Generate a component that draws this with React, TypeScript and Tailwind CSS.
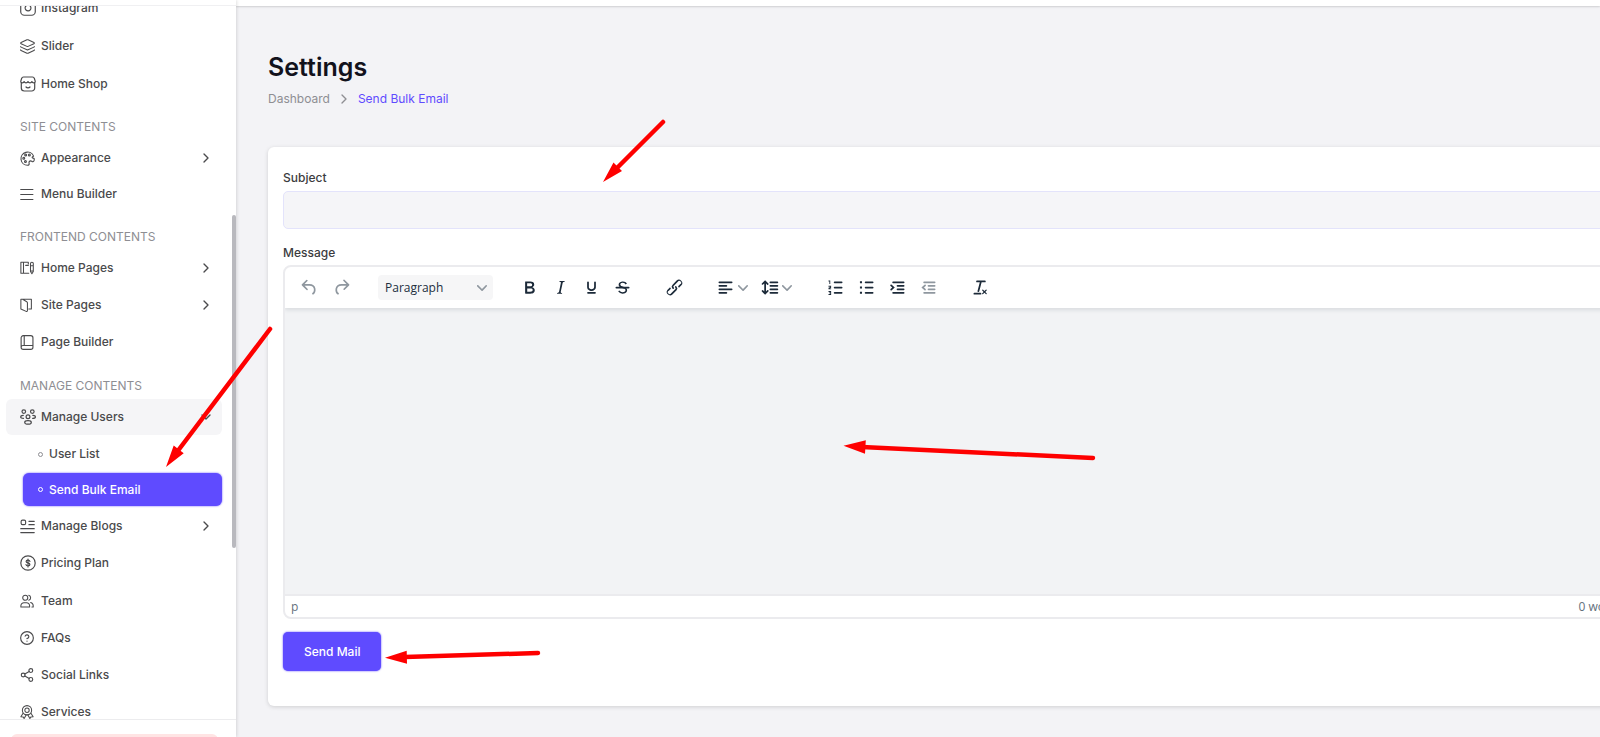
import type { ReactNode } from 'react'
import { ChevronRight, CircleHelp, Instagram, Layers, Share2 } from 'lucide-react'

type NavItem = {
    label: string
    icon: ReactNode
    size?: 'sm' | 'md' | 'lg'
    arrow?: boolean
}

const heights = {
    sm: 'h-9',
    md: 'h-[37px]',
    lg: 'h-[38px]',
}

// cuts the empty edge lucide leaves around its icons
const tight = '1 1 22 22'

function Svg({ children, size = 15 }: { children: ReactNode; size?: number }) {
    return (
        <svg width={size} height={size} viewBox="0 0 16 16" fill="none" stroke="currentColor" strokeWidth="1.2" strokeLinecap="round" strokeLinejoin="round">
            {children}
        </svg>
    )
}

const shopIcon = (
    <Svg size={16}>
        <path d="M1.300 6.500V12a3 3 0 0 0 3 3h7.400a3 3 0 0 0 3-3V6.500" />
        <path d="M3.500 1h9c1.100 0 1.600.5 1.800 1.300l.9 2.800c.2 1-.6 1.700-1.500 1.700s-1.600-.6-1.800-1.300c-.3.8-1 1.300-1.900 1.300S8.300 6.300 8 5.500c-.3.8-1.100 1.300-2 1.300s-1.600-.5-1.900-1.300c-.2.700-.9 1.300-1.800 1.300S.6 6.100.8 5.100l.9-2.800C1.900 1.500 2.400 1 3.500 1z" />
        <path d="M6 11c1 1.200 3 1.200 4 0" />
    </Svg>
)

const paletteIcon = (
    <Svg size={15}>
        <path d="M14.500 5.500A7 7 0 1 0 8 15.200c1.700 0 2-1 1.700-2-.4-1.400.3-2.700 1.700-2.700.9 0 1.300 1 2.200 1 1.200 0 1.700-1.500 1.600-3.300-.6-.9-2.200-.2-2.300-1.200-.1-.7 1-1 1.600-1.500z" />
        <circle cx="6" cy="4.200" r="1" />
        <circle cx="10" cy="4.200" r="1" />
        <circle cx="4" cy="7.700" r="1" />
        <circle cx="5.800" cy="11.300" r="1" />
    </Svg>
)

const menuIcon = (
    <Svg size={14}>
        <path d="M.8 2.800h14M.8 8.500h14M.8 14.200h14" />
    </Svg>
)

const homePagesIcon = (
    <Svg size={14}>
        <path d="M9.500 1.500H1v12.500h9M4 1.500V14M9.500 1.500v2M6.500 5h3" />
        <path d="M12 3a1.500 1.500 0 0 1 3.200 0v9l-1.600 2.500L12 12zM12 5.500h3M12 11.500h3" />
    </Svg>
)

const sitePagesIcon = (
    <Svg size={14}>
        <path d="M1 1.500h12v11h-3M1 1.500v11l6 2.800c.8.300 1.500-.2 1.500-1V5.500c0-.6-.3-1-.8-1.300L3.500 1.700" />
    </Svg>
)

const pageBuilderIcon = (
    <Svg size={15}>
        <path d="M3.500.7h8a2.300 2.300 0 0 1 2.300 2.300v10a2.300 2.300 0 0 1-2.300 2.300h-8A2.300 2.300 0 0 1 1.200 13V3A2.300 2.300 0 0 1 3.500.7zM4.500.7v10.500M1.200 13a2 2 0 0 1 2-1.800h10.600" />
    </Svg>
)

const usersIcon = (
    <Svg size={16}>
        <circle cx="3.800" cy="2.600" r="1.800" />
        <circle cx="12.300" cy="2.600" r="1.800" />
        <circle cx="8" cy="7.800" r="1.900" />
        <path d="M3.500 9.300C1.800 9.300.7 8.800.7 7.900s1-1.600 2.600-1.600M12.600 9.300c1.700 0 2.800-.5 2.800-1.400s-1-1.600-2.600-1.600" />
        <ellipse cx="8" cy="13.400" rx="3.300" ry="1.800" />
    </Svg>
)

const blogIcon = (
    <Svg size={15}>
        <rect x="1.200" y="1.200" width="4.800" height="4.800" rx="1.500" />
        <path d="M9.500 2.500h5.700M9.500 6h5.700M.8 10.300h14.400M.8 14.500h14.400" />
    </Svg>
)

const pricingIcon = (
    <Svg size={16}>
        <circle cx="8" cy="8" r="7.200" />
        <path d="M9.900 6.300C9.700 5.600 9 5.100 8 5.100c-1.100 0-1.900.6-1.900 1.400C6.100 8.500 9.900 7.300 9.900 9.500c0 .9-.8 1.400-1.900 1.400-1 0-1.800-.5-2-1.300M8 4v8" />
    </Svg>
)

const teamIcon = (
    <Svg size={14}>
        <circle cx="6" cy="4.300" r="2.900" />
        <path d="M1 14.800v-1.300A3.500 3.500 0 0 1 4.500 10h3a3.500 3.500 0 0 1 3.500 3.500v1.300zM10 1.500a2.900 2.900 0 0 1 0 5.600M12.200 9.700c1.900.6 2.900 1.800 2.900 3.800v1.300h-1.500" />
    </Svg>
)

const servicesIcon = (
    <Svg size={14}>
        <circle cx="8" cy="6" r="5.300" />
        <circle cx="8" cy="6" r="2.500" />
        <path d="M3.500 9.500L1 13.500l2.500.1 1.200 1.900 2.300-4.200M12.500 9.500l2.500 4-2.500.1-1.200 1.900L9 11.300" />
    </Svg>
)

const topItems: NavItem[] = [
    { label: 'Instagram', icon: <Instagram size={16} viewBox={tight} strokeWidth={1.6} />, size: 'lg' },
    { label: 'Slider', icon: <Layers size={15} viewBox={tight} strokeWidth={1.6} />, size: 'lg' },
    { label: 'Home Shop', icon: shopIcon, size: 'md' },
]

const siteItems: NavItem[] = [
    { label: 'Appearance', icon: paletteIcon, arrow: true },
    { label: 'Menu Builder', icon: menuIcon },
]

const frontendItems: NavItem[] = [
    { label: 'Home Pages', icon: homePagesIcon, arrow: true },
    { label: 'Site Pages', icon: sitePagesIcon, size: 'md', arrow: true },
    { label: 'Page Builder', icon: pageBuilderIcon, size: 'lg' },
]

const manageItems: NavItem[] = [
    { label: 'Manage Blogs', icon: blogIcon, arrow: true },
    { label: 'Pricing Plan', icon: pricingIcon, size: 'lg' },
    { label: 'Team', icon: teamIcon, size: 'md' },
    { label: 'FAQs', icon: <CircleHelp size={14} viewBox={tight} strokeWidth={1.8} />, size: 'md' },
    { label: 'Social Links', icon: <Share2 size={14} viewBox={tight} strokeWidth={1.8} />, size: 'md' },
    { label: 'Services', icon: servicesIcon, size: 'lg' },
]

function NavLink({ item, open = false }: { item: NavItem; open?: boolean }) {
    return (
        <a href="#" className={`flex shrink-0 items-center rounded-md pl-3.5 pr-2 ${heights[item.size ?? 'sm']} ${open ? 'bg-[#f5f5f7]' : ''}`}>
            <span className="w-[21px] shrink-0">{item.icon}</span>
            <span className="flex-1">{item.label}</span>
            {(item.arrow || open) && <ChevronRight size={16} className={open ? 'rotate-90' : ''} />}
        </a>
    )
}

function NavTitle({ children }: { children: ReactNode }) {
    return <h2 className="flex h-[38px] shrink-0 items-end pb-1 pl-3.5 text-xs leading-[18px] font-normal text-[#8e8e93] uppercase">{children}</h2>
}

function Sidebar() {
    return (
        <aside className="relative z-10 flex w-[236px] shrink-0 flex-col bg-white shadow-[1px_0_3px_rgba(0,0,0,0.12)]">
            <div className="h-1.5 shrink-0 border-b border-[#f0f0f2]"></div>
            <nav className="flex min-h-0 flex-1 flex-col overflow-hidden pr-3.5 pl-1.5 text-xs font-medium text-[#4a4a4c]">
                <div className="-mt-[17px]">
                    {topItems.map((item) => <NavLink key={item.label} item={item} />)}
                </div>
                <NavTitle>Site Contents</NavTitle>
                {siteItems.map((item) => <NavLink key={item.label} item={item} />)}
                <NavTitle>Frontend Contents</NavTitle>
                {frontendItems.map((item) => <NavLink key={item.label} item={item} />)}
                <NavTitle>Manage Contents</NavTitle>
                <NavLink item={{ label: 'Manage Users', icon: usersIcon }} open />
                <div className="shrink-0 pb-0.5 pl-[17px]">
                    <a href="#" className="flex h-[38px] items-center gap-1.5 pl-[15px]">
                        <span className="size-[5px] rounded-full border border-[#8e8e93]"></span>
                        User List
                    </a>
                    <a href="#" className="flex h-[33px] items-center gap-1.5 rounded-md bg-[#5f4bff] pl-[15px] text-white shadow-[0_0_2px_#5f4bff]">
                        <span className="size-[5px] rounded-full border border-white"></span>
                        Send Bulk Email
                    </a>
                </div>
                {manageItems.map((item) => <NavLink key={item.label} item={item} />)}
            </nav>
            <div className="h-[18px] shrink-0 overflow-hidden border-t border-[#ececee] pt-3.5 pr-[18px] pl-[11px]">
                <div className="h-9 rounded-md bg-[#ffe4e4]"></div>
            </div>
            <div className="absolute top-[215px] right-0 h-[333px] w-1 rounded-full bg-[#b9b9be]"></div>
        </aside>
    )
}

const bar = (x: number, y: number, w: number) => `M${x} ${y}h${w}a1 1 0 0 1 0 2h-${w}a1 1 0 0 1 0-2z`

const paths = {
    undo: 'M6.4 8H12c3.700 0 6.200 2 6.800 5.100.6 2.700-.4 5.600-2.300 6.800a1 1 0 0 1-1-1.800c1.100-.6 1.800-2.700 1.400-4.600-.5-2.100-2.100-3.500-4.900-3.500H6.400l3.300 3.300a1 1 0 1 1-1.400 1.400l-5-5a1 1 0 0 1 0-1.400l5-5a1 1 0 0 1 1.400 1.400L6.400 8Z',
    redo: 'M17.6 10H12c-2.800 0-4.400 1.400-4.900 3.500-.4 2 .3 4 1.400 4.600a1 1 0 1 1-1 1.800c-2-1.200-2.900-4.100-2.300-6.800.6-3 3-5.100 6.800-5.100h5.600l-3.300-3.300a1 1 0 1 1 1.400-1.400l5 5a1 1 0 0 1 0 1.400l-5 5a1 1 0 0 1-1.400-1.400l3.300-3.300Z',
    bold: 'M7.8 19c-.3 0-.5 0-.6-.2l-.2-.5V5.700c0-.2 0-.4.2-.5l.6-.2h5c1.500 0 2.700.3 3.500 1 .7.6 1.100 1.400 1.100 2.500a3 3 0 0 1-.6 1.900c-.4.6-1 1-1.600 1.200.4.1.9.3 1.300.6s.8.7 1 1.200c.4.4.5 1 .5 1.600 0 1.300-.4 2.300-1.300 3-.8.7-2.100 1-3.800 1H7.800Zm5-8.300c.6 0 1.200-.1 1.600-.5.4-.3.6-.7.6-1.300 0-1.100-.8-1.700-2.300-1.700H9.300v3.500h3.400Zm.5 6c.7 0 1.300-.1 1.700-.4.4-.4.6-.9.6-1.500s-.2-1-.7-1.400c-.4-.3-1-.4-2-.4H9.400v3.800h4Z',
    italic: 'm16.7 4.700-.1.9h-.3c-.6 0-1 0-1.400.3-.3.3-.4.6-.5 1.100l-2.100 9.800v.6c0 .5.4.8 1.400.8h.2l-.2.8H8l.2-.8h.2c1.100 0 1.800-.5 2-1.500l2-9.800.1-.5c0-.6-.4-.8-1.400-.8h-.3l.2-.9h5.800Z',
    underline: 'M16 5c.6 0 1 .4 1 1v5.500a4 4 0 0 1-.4 1.800l-1 1.400a5.300 5.300 0 0 1-5.500 1 5 5 0 0 1-1.600-1c-.5-.4-.8-.9-1.100-1.400a4 4 0 0 1-.4-1.800V6c0-.6.4-1 1-1s1 .4 1 1v5.500c0 .3 0 .6.2 1l.6.7a3.300 3.300 0 0 0 2.200.8 3.400 3.400 0 0 0 2.200-.8c.3-.2.4-.5.6-.8l.2-.9V6c0-.6.4-1 1-1Z' + bar(8, 17, 8),
    strikeTop: 'M15.600 8.500c-.5-.7-1-1.100-1.300-1.300-.6-.4-1.300-.6-2-.6-2.700 0-2.800 1.700-2.800 2.100 0 1.600 1.800 2 3.200 2.300 4.400.9 4.600 2.800 4.600 3.900 0 1.400-.7 4.100-5 4.100A6.200 6.200 0 0 1 7 16.400l1.500-1.100c.4.6 1.600 2 3.700 2 1.600 0 2.500-.4 3-1.200.4-.8.3-2-.8-2.600-.7-.4-1.600-.7-2.900-1-1-.2-3.900-.8-3.900-3.600C7.600 6 10.300 5 12.400 5c2.900 0 4.200 1.600 4.700 2.400l-1.500 1.100Z',
    strikeBar: bar(5, 11, 14),
    link: 'M6.2 12.300a1 1 0 0 1 1.400 1.400l-2 2a2 2 0 1 0 2.600 2.800l4.800-4.800a1 1 0 0 0 0-1.400 1 1 0 1 1 1.400-1.300 2.900 2.900 0 0 1 0 4L9.600 20a3.900 3.900 0 0 1-5.500-5.500l2-2Zm11.600-.6a1 1 0 0 1-1.400-1.400l2-2a2 2 0 1 0-2.600-2.800L11 10.300a1 1 0 0 0 0 1.400A1 1 0 1 1 9.600 13a2.900 2.900 0 0 1 0-4L14.400 4a3.900 3.900 0 0 1 5.500 5.500l-2 2Z',
    align: bar(5, 5, 14) + bar(5, 9, 8) + bar(5, 13, 14) + bar(5, 17, 8),
    lineHeight: bar(13, 5, 8) + bar(13, 9, 8) + bar(13, 13, 8) + bar(13, 17, 8) + 'M7 3.600l3.700 3.700a1 1 0 0 1-1.300 1.500h-.1L8 7.300v9.200l1.300-1.300a1 1 0 0 1 1.300 0h.1c.4.4.4 1 0 1.300v.1L7 20.400l-3.700-3.700a1 1 0 0 1 1.300-1.500h.1L6 16.700V7.400L4.700 8.700a1 1 0 0 1-1.300 0h-.1a1 1 0 0 1 0-1.300v-.1L7 3.600z',
    ordered: bar(11, 5, 8) + bar(11, 11, 8) + bar(11, 17, 8) + 'M6 4v4H5V5H4V4zM4 10h3v2.300L5.500 13H7v1H4v-1.700L6 11.500V11H4zM4 16h3v4.500H4v-1h2v-.8H4.500v-1H6V17H4z',
    bullet: bar(11, 5, 8) + bar(11, 11, 8) + bar(11, 17, 8) + 'M4.500 4.800h2.400v2.400H4.500zM4.500 10.800h2.400v2.400H4.500zM4.500 16.800h2.400v2.400H4.500z',
    indent: bar(7, 5, 12) + bar(12, 9, 7) + bar(12, 13, 7) + bar(7, 17, 12) + 'M4 8.800a1 1 0 0 1 1.400 0l3.500 3.200-3.500 3.200A1 1 0 0 1 4 13.800L6 12 4 10.200a1 1 0 0 1 0-1.400z',
    outdent: bar(7, 5, 12) + bar(12, 9, 7) + bar(12, 13, 7) + bar(7, 17, 12) + 'M8.800 8.800a1 1 0 0 0-1.400 0L3.900 12l3.500 3.200a1 1 0 0 0 1.400-1.400L6.800 12l2-1.800a1 1 0 0 0 0-1.400z',
    clear: 'M13.200 6a1 1 0 0 1 0 .2l-2.600 10a1 1 0 0 1-1 .8h-.2a.8.800 0 0 1-.8-1l2.600-10H8a1 1 0 1 1 0-2h9a1 1 0 0 1 0 2h-3.800ZM5 18h7a1 1 0 0 1 0 2H5a1 1 0 0 1 0-2Zm13 1.500L16.500 18 15 19.500a.7.700 0 0 1-1-1l1.500-1.500-1.500-1.500a.7.700 0 0 1 1-1l1.500 1.500 1.500-1.500a.7.700 0 0 1 1 1L17.500 17l1.500 1.500a.7.700 0 0 1-1 1Z',
}

function Chevron() {
    return (
        <svg width="10" height="10" viewBox="0 0 10 10" fill="#8f979f">
            <path d="M8.700 2.200c.3-.3.8-.3 1 0 .4.4.4.9 0 1.200L5.700 7.800c-.3.300-.9.300-1.200 0L.2 3.400a.8.800 0 0 1 0-1.200c.3-.3.8-.3 1.100 0L5 6l3.700-3.800Z" />
        </svg>
    )
}

type ToolProps = {
    names: (keyof typeof paths)[]
    label: string
    off?: boolean
    menu?: boolean
}

function Tool({ names, label, off = false, menu = false }: ToolProps) {
    return (
        <button type="button" aria-label={label} className={`flex h-7 items-center ${menu ? 'w-11 gap-0.5 pl-1' : 'w-[31px] justify-center'} ${off ? 'text-[#8f979f]' : 'text-[#1c2a39]'}`}>
            <svg width="21" height="21" viewBox="0 0 24 24" fill="currentColor" className="shrink-0">
                {names.map((name) => <path key={name} d={paths[name]} />)}
            </svg>
            {menu && <Chevron />}
        </button>
    )
}

function Editor() {
    return (
        <div className="overflow-hidden rounded-lg border-2 border-[#ebebee] bg-white">
            <div className="relative flex h-[41px] items-center gap-[21px] pl-[9px] shadow-[0_2px_4px_rgba(34,47,62,0.12)]">
                <div className="flex gap-px">
                    <Tool names={['undo']} label="Undo" off />
                    <Tool names={['redo']} label="Redo" off />
                </div>
                <div className="relative flex items-center">
                    <select aria-label="Block format" className="h-[25px] w-[115px] appearance-none rounded-sm bg-[#f6f6f7] pl-[7px] font-['Open_Sans',sans-serif] text-xs text-[#222f3e]">
                        <option>Paragraph</option>
                    </select>
                    <span className="pointer-events-none absolute right-1.5"><Chevron /></span>
                </div>
                <div className="flex">
                    <Tool names={['bold']} label="Bold" />
                    <Tool names={['italic']} label="Italic" />
                    <Tool names={['underline']} label="Underline" />
                    <Tool names={['strikeTop', 'strikeBar']} label="Strikethrough" />
                </div>
                <Tool names={['link']} label="Insert link" />
                <div className="flex">
                    <Tool names={['align']} label="Align" menu />
                    <Tool names={['lineHeight']} label="Line height" menu />
                </div>
                <div className="flex">
                    <Tool names={['ordered']} label="Numbered list" />
                    <Tool names={['bullet']} label="Bullet list" />
                    <Tool names={['indent']} label="Increase indent" />
                    <Tool names={['outdent']} label="Decrease indent" off />
                </div>
                <Tool names={['clear']} label="Clear formatting" />
            </div>
            <textarea id="message" className="block h-[286px] w-full resize-none bg-[#f2f3f5] p-3 outline-none"></textarea>
            <div className="flex h-[23px] items-center justify-between border-t-2 border-[#ebebee] pr-6 pl-1.5 font-['Open_Sans',sans-serif] text-xs text-[#64707c]">
                <span>p</span>
                <span>0 words</span>
            </div>
        </div>
    )
}

function Arrows() {
    return (
        <svg className="pointer-events-none absolute top-0 left-0 z-20" width="1100" height="700" fill="#fe0000" stroke="#fe0000" strokeLinecap="round">
            <g strokeWidth="4.500">
                <path d="M663 122 616 169M270 329 177 452M1093 458 862 447M538 653 405 657" />
            </g>
            <g stroke="none">
                <path d="M603 182l10.500-19.500 8.500 8.500zM166 467l7.700-21.500 10 7.800zM843.500 445.700l22.300-5.500-.8 13.500zM385 657.700l21.700-7 .3 13z" />
            </g>
        </svg>
    )
}

export default function App() {
    return (
        <div className="relative flex h-screen overflow-hidden bg-[#f3f3f6] font-[Inter,sans-serif]">
            <Sidebar />
            <div className="min-w-0 flex-1 overflow-hidden">
                <header className="h-1.5 bg-white shadow-[0_1px_2px_rgba(0,0,0,0.15)]"></header>
                <main className="-mr-16 pt-11 pl-8">
                    <h1 className="text-[25px] leading-[35px] font-semibold text-[#12121c]">Settings</h1>
                    <div className="mt-[5px] flex items-center gap-1.5 text-xs leading-[18px] text-[#8e8e93]">
                        <a href="#">Dashboard</a>
                        <ChevronRight size={16} />
                        <a href="#" className="text-[#5f4bff]">Send Bulk Email</a>
                    </div>
                    <form className="mt-[39px] rounded-md bg-white px-[15px] pt-[22px] pb-[35px] shadow-[0_1px_4px_rgba(0,0,0,0.15)]" onSubmit={(e) => e.preventDefault()}>
                        <label htmlFor="subject" className="block text-xs leading-[18px] font-medium text-[#3c3c40]">Subject</label>
                        <input id="subject" type="text" className="mt-1 block h-[38px] w-full rounded-[5px] border border-[#e3e3fb] bg-[#f5f5f8] px-3 text-xs outline-none" />
                        <label htmlFor="message" className="mt-[15px] mb-[3px] block text-xs leading-[18px] font-medium text-[#3c3c40]">Message</label>
                        <Editor />
                        <button type="submit" className="mt-[13px] h-[39px] rounded-[5px] bg-[#5f4bff] px-[21px] text-xs font-medium text-white shadow-[0_0_2px_#5f4bff]">Send Mail</button>
                    </form>
                </main>
            </div>
            <Arrows />
        </div>
    )
}
